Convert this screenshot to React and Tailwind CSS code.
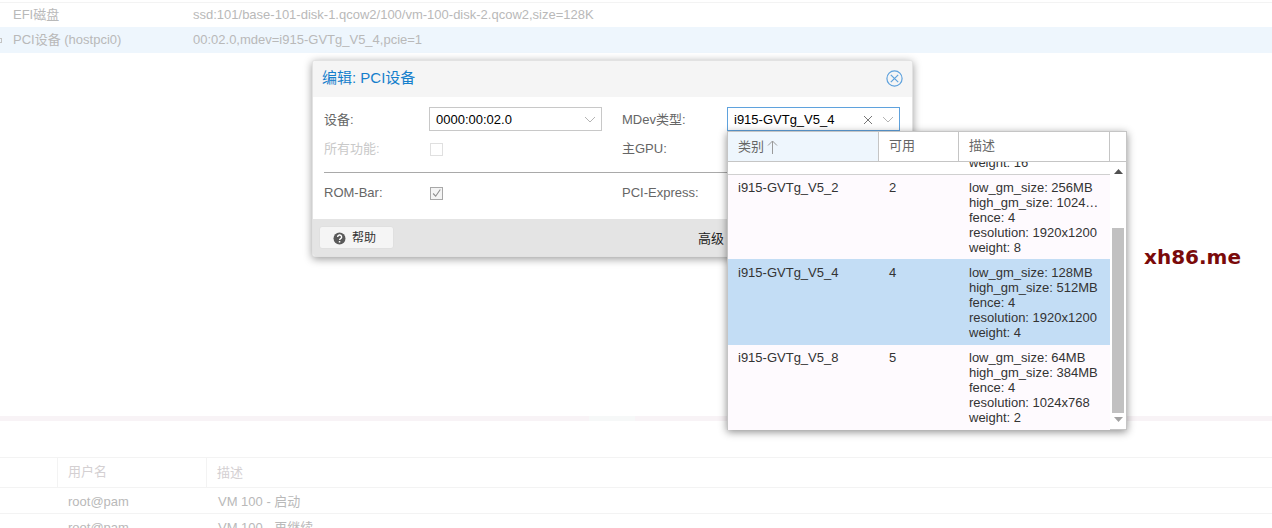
import React from "react";

const FONT = "font-['Liberation_Sans','Noto_Sans_CJK_SC',sans-serif]";

const Chevron = () => (
  <svg width="12" height="7" viewBox="0 0 12 7" className="shrink-0">
    <path d="M1 1l5 5 5-5" fill="none" stroke="#b4b4b4" strokeWidth="1" />
  </svg>
);

const Check = () => (
  <span className="w-[13px] h-[13px] border border-[#a8a8a8] bg-[#f4f4f4] flex items-center justify-center">
    <svg width="13" height="13" viewBox="0 0 13 13">
      <path d="M2.5 6.5l3 3.2 5.5-8" fill="none" stroke="#8f8f8f" strokeWidth="1.3" />
    </svg>
  </span>
);

const rows = [
  { name: "i915-GVTg_V5_2", n: "2", h: "h-[84px] pt-[5px]", bg: "bg-[#fefafe]", lines: ["low_gm_size: 256MB", "high_gm_size: 1024…", "fence: 4", "resolution: 1920x1200", "weight: 8"] },
  { name: "i915-GVTg_V5_4", n: "4", h: "h-[86px] pt-[6px]", bg: "bg-[#c3ddf5]", lines: ["low_gm_size: 128MB", "high_gm_size: 512MB", "fence: 4", "resolution: 1920x1200", "weight: 4"] },
  { name: "i915-GVTg_V5_8", n: "5", h: "h-[85px] pt-[5px]", bg: "bg-[#fefafe]", lines: ["low_gm_size: 64MB", "high_gm_size: 384MB", "fence: 4", "resolution: 1024x768", "weight: 2"] },
];

const Dropdown = () => (
  <div className="absolute left-[727px] top-[131px] w-[400px] h-[299px] bg-white border border-[#c5c5c5] shadow-[0_2px_8px_rgba(0,0,0,0.45)] flex flex-col z-20">
    <div className="h-[30px] shrink-0 flex border-b border-[#c5c5c5] text-[13px] text-[#666]">
      <div className="w-[151px] bg-[#eef6fd] border-r border-[#c5c5c5] pl-[10px] leading-[28px] flex items-center gap-[3px]">
        类别
        <svg width="11" height="14" viewBox="0 0 11 14">
          <path d="M5.5 14V1M1 5.5l4.5-4.5 4.5 4.5" fill="none" stroke="#9a9a9a" strokeWidth="1" />
        </svg>
      </div>
      <div className="w-[80px] border-r border-[#c5c5c5] pl-[10px] leading-[28px]">可用</div>
      <div className="w-[151px] border-r border-[#c5c5c5] pl-[10px] leading-[28px]">描述</div>
    </div>
    <div className="flex flex-1 min-h-0">
      <div className="w-[382px] text-[13px] leading-[15px] text-[#333]">
        <div className="h-[13px] overflow-hidden flex items-end border-b border-[#d0d0d0] pl-[241px] pb-[4px]">
          <span className="block shrink-0">weight: 16</span>
        </div>
        {rows.map((r) => (
          <div key={r.name} className={`flex ${r.h} ${r.bg}`}>
            <div className="w-[151px] pl-[10px]">{r.name}</div>
            <div className="w-[80px] pl-[10px]">{r.n}</div>
            <div className="flex-1 pl-[10px]">
              {r.lines.map((l) => (
                <div key={l} className="whitespace-nowrap">{l}</div>
              ))}
            </div>
          </div>
        ))}
      </div>
      <div className="w-[16px] flex flex-col items-center bg-white pt-[7px] pb-[6px]">
        <svg width="9" height="5" viewBox="0 0 9 5"><path d="M4.5 0L9 5H0z" fill="#505050" /></svg>
        <div className="w-[12px] h-[185px] bg-[#c1c1c1] mt-[54px]" />
        <svg width="9" height="5" viewBox="0 0 9 5" className="mt-[4px]"><path d="M0 0h9L4.5 5z" fill="#a3a3a3" /></svg>
      </div>
    </div>
  </div>
);

const Dialog = () => (
  <div className="absolute left-[312px] top-[60px] w-[601px] h-[197px] bg-white rounded-[3px] border border-[#e2e2e2] shadow-[0_2px_9px_rgba(0,0,0,0.4)] flex flex-col overflow-hidden z-10">
    <div className="h-[36px] shrink-0 bg-[#f5f5f5] flex items-center justify-between pl-[9px] pr-[9px] pb-[1px]">
      <span className="text-[15px] text-[#157fcc]">编辑: PCI设备</span>
      <svg width="17" height="17" viewBox="0 0 17 17">
        <circle cx="8.5" cy="8.5" r="7.6" fill="none" stroke="#5fa2dd" strokeWidth="1.2" />
        <path d="M4.8 4.8l7.4 7.4M12.2 4.8l-7.4 7.4" stroke="#5fa2dd" strokeWidth="1.2" />
      </svg>
    </div>
    <div className="flex-1 text-[13px] text-[#666] px-[11px] pt-[10px]">
      <div className="grid grid-cols-[105px_173px_125px_173px] gap-x-0 items-center">
        <span className="pt-[2px]">设备:</span>
        <div className="h-[24px] border border-[#c8c8c8] flex items-center justify-between pl-[6px] pr-[5px] pt-[1px] text-[#000]">
          <span>0000:00:02.0</span>
          <Chevron />
        </div>
        <span className="pl-[20px] pt-[2px]">MDev类型:</span>
        <div className="h-[24px] border border-[#5fa2dd] flex items-center justify-between pl-[6px] pr-[5px] pt-[1px] text-[#000]">
          <span>i915-GVTg_V5_4</span>
          <span className="flex items-center gap-[9px]">
            <svg width="10" height="10" viewBox="0 0 10 10"><path d="M1 1l8 8M9 1l-8 8" stroke="#777" strokeWidth="1" /></svg>
            <Chevron />
          </span>
        </div>
      </div>
      <div className="grid grid-cols-[105px_173px_125px] items-center mt-[8px] h-[20px]">
        <span className="text-[#c9c9c9]">所有功能:</span>
        <span className="w-[13px] h-[13px] border border-[#e0e0e0] ml-[1px]" />
        <span className="pl-[20px]">主GPU:</span>
      </div>
      <div className="h-px bg-[#a9a9a9] mt-[13px]" />
      <div className="grid grid-cols-[105px_173px_125px] items-center mt-[10px] h-[20px]">
        <span>ROM-Bar:</span>
        <span className="ml-[1px]"><Check /></span>
        <span className="pl-[20px]">PCI-Express:</span>
      </div>
    </div>
    <div className="h-[37px] shrink-0 bg-[#e4e4e4] flex items-center pl-[6px]">
      <button className="w-[75px] h-[23px] bg-[#f5f5f5] border border-[#e0e0e0] rounded-[3px] flex items-center gap-[6px] pl-[13px] pt-[1px] text-[12px] text-[#333]">
        <svg width="13" height="13" viewBox="0 0 13 13">
          <circle cx="6.5" cy="6.5" r="6" fill="#5a5a5a" />
          <path d="M4.6 5a2 2 0 1 1 3 1.7c-.7.4-1 .7-1 1.4" fill="none" stroke="#fff" strokeWidth="1.4" />
          <rect x="5.8" y="9" width="1.5" height="1.5" fill="#fff" />
        </svg>
        帮助
      </button>
      <span className="ml-[304px] pt-[2px] text-[13px] text-[#222]">高级</span>
    </div>
  </div>
);

const App = () => {
  return (
    <div className={`relative w-[1272px] h-[528px] overflow-hidden bg-white ${FONT}`}>
      {/* masked page behind the dialog */}
      <div className="text-[13px] text-[#b9b9b9]">
        <div className="h-[3px] border-b border-[#f3f3f3]" />
        <div className="h-[24px] flex items-center">
          <span className="w-[193px] pl-[13px]">EFI磁盘</span>
          <span>ssd:101/base-101-disk-1.qcow2/100/vm-100-disk-2.qcow2,size=128K</span>
        </div>
        <div className="h-[26px] flex items-center bg-[#eef6fd]">
          <span className="w-[2px] h-[5px] border-y border-r border-[#c4c4c4]" />
          <span className="w-[191px] pl-[11px]">PCI设备 (hostpci0)</span>
          <span>00:02.0,mdev=i915-GVTg_V5_4,pcie=1</span>
        </div>
        <div className="h-[5px] bg-[#f8f3f6] mt-[363px] flex">
          <span className="ml-[589px] w-[46px] bg-[#f6f8f8]" />
        </div>
        <div className="mt-[36px] h-[31px] flex items-center border-y border-[#f3f3f3] text-[#d4d0d2]">
          <span className="w-[58px] h-full border-r border-[#f3f3f3]" />
          <span className="w-[149px] h-full border-r border-[#f3f3f3] pl-[10px] leading-[28px]">用户名</span>
          <span className="pl-[10px]">描述</span>
        </div>
        <div className="h-[26px] flex items-center border-b border-[#f3f3f3] pt-[2px]">
          <span className="w-[58px]" />
          <span className="w-[150px] pl-[10px]">root@pam</span>
          <span className="pl-[10px]">VM 100 - 启动</span>
        </div>
        <div className="h-[26px] flex items-center pt-[2px]">
          <span className="w-[58px]" />
          <span className="w-[150px] pl-[10px]">root@pam</span>
          <span className="pl-[10px]">VM 100 - 再继续</span>
        </div>
      </div>
      <Dialog />
      <Dropdown />
      <span className="absolute left-[1144px] top-[244px] text-[20px] leading-[26px] font-bold text-[#7a0a0a] font-['DejaVu_Sans',sans-serif] z-10">xh86.me</span>
    </div>
  );
};

export default App;
